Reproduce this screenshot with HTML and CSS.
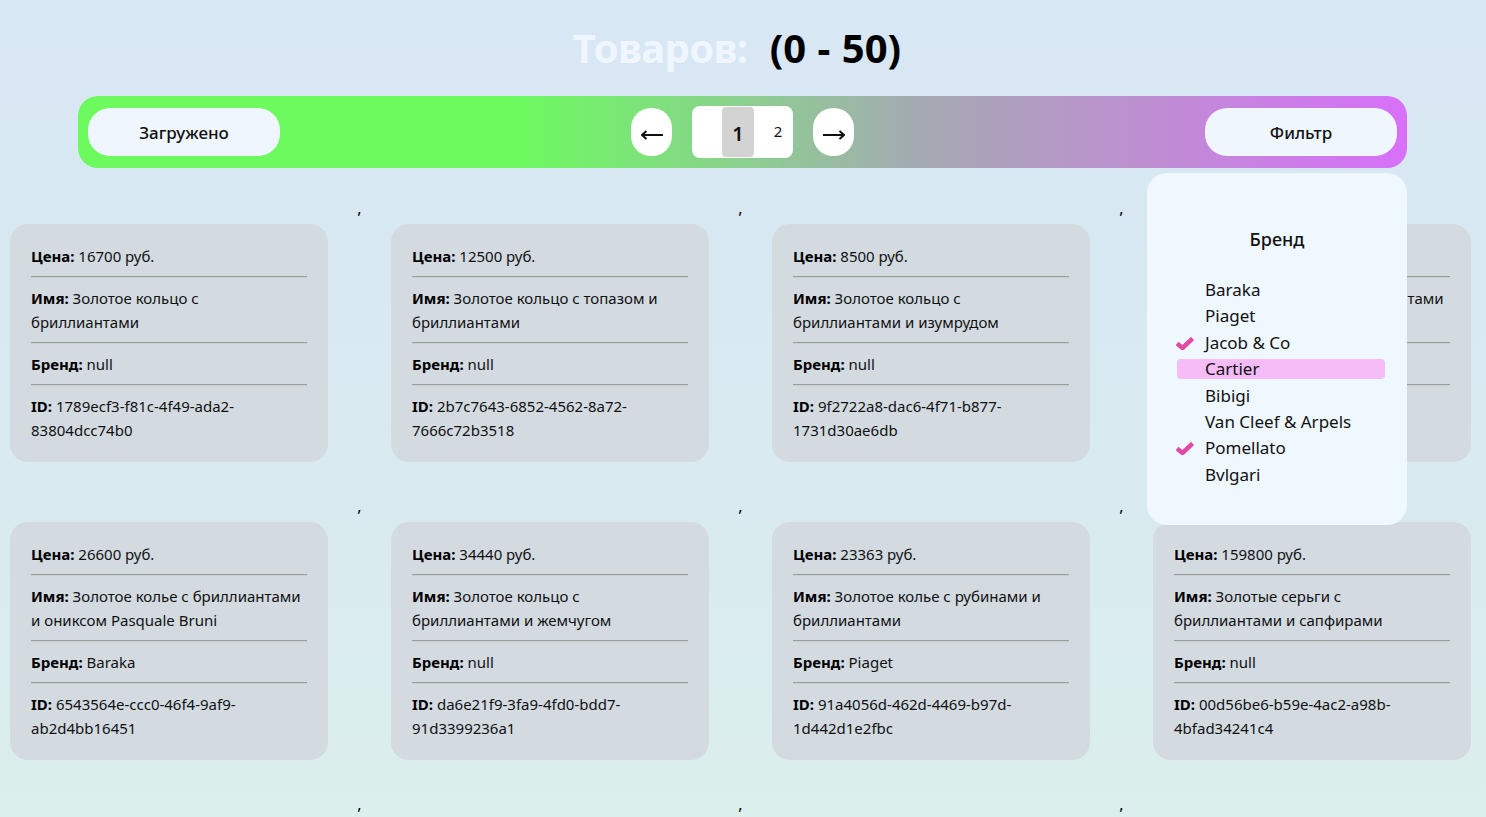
FILE: index.html
```html
<!DOCTYPE html>
<html lang="ru">
<head>
<meta charset="utf-8">
<title>Товары</title>
<link rel="stylesheet" href="styles.css">
</head>
<body>
<header class="header">
  <h1 class="title"><span class="title-label">Товаров:</span> <span class="title-range">(0 - 50)</span></h1>
</header>

<nav class="toolbar">
  <button class="pill">Загружено</button>
  <div class="pager">
    <button class="arrow" aria-label="Назад"><svg class="arrow-icon" viewBox="0 0 22 10"><path d="M1 5 H22 M5.5 1 L1 5 L5.5 9" /></svg></button>
    <div class="pages">
      <span class="page page-active">1</span>
      <span class="page page-small">2</span>
    </div>
    <button class="arrow" aria-label="Вперёд"><svg class="arrow-icon" viewBox="0 0 22 10"><path d="M0 5 H21 M16.5 1 L21 5 L16.5 9" /></svg></button>
  </div>
  <button class="pill">Фильтр</button>
</nav>

<div class="filter">
  <div class="filter-title">Бренд</div>
  <ul class="filter-list">
    <li class="filter-item">Baraka</li>
    <li class="filter-item">Piaget</li>
    <li class="filter-item checked"><svg class="check" viewBox="0 0 18 13"><path d="M1 6.5 L6.5 11 L16.5 1.5" /></svg>Jacob &amp; Co</li>
    <li class="filter-item hover">Cartier</li>
    <li class="filter-item">Bibigi</li>
    <li class="filter-item">Van Cleef &amp; Arpels</li>
    <li class="filter-item checked"><svg class="check" viewBox="0 0 18 13"><path d="M1 6.5 L6.5 11 L16.5 1.5" /></svg>Pomellato</li>
    <li class="filter-item">Bvlgari</li>
  </ul>
</div>

<main class="grid">
  <article class="card">
    <p><b>Цена:</b> 16700 руб.</p><hr>
    <p><b>Имя:</b> Золотое кольцо с бриллиантами</p><hr>
    <p><b>Бренд:</b> null</p><hr>
    <p><b>ID:</b> 1789ecf3-f81c-4f49-ada2-83804dcc74b0</p>
  </article>
  <span class="sep">,</span>
  <article class="card">
    <p><b>Цена:</b> 12500 руб.</p><hr>
    <p><b>Имя:</b> Золотое кольцо с топазом и бриллиантами</p><hr>
    <p><b>Бренд:</b> null</p><hr>
    <p><b>ID:</b> 2b7c7643-6852-4562-8a72-7666c72b3518</p>
  </article>
  <span class="sep">,</span>
  <article class="card">
    <p><b>Цена:</b> 8500 руб.</p><hr>
    <p><b>Имя:</b> Золотое кольцо с бриллиантами и изумрудом</p><hr>
    <p><b>Бренд:</b> null</p><hr>
    <p><b>ID:</b> 9f2722a8-dac6-4f71-b877-1731d30ae6db</p>
  </article>
  <span class="sep">,</span>
  <article class="card">
    <p><b>Цена:</b> 41200 руб.</p><hr>
    <p><b>Имя:</b> Золотое колье с бриллиантами и сапфирами</p><hr>
    <p><b>Бренд:</b> null</p><hr>
    <p><b>ID:</b> 5c1e9a02-7d3b-4e8f-9c21-0a6b7f4d2e91</p>
  </article>

  <article class="card">
    <p><b>Цена:</b> 26600 руб.</p><hr>
    <p><b>Имя:</b> Золотое колье с бриллиантами и ониксом Pasquale Bruni</p><hr>
    <p><b>Бренд:</b> Baraka</p><hr>
    <p><b>ID:</b> 6543564e-ccc0-46f4-9af9-ab2d4bb16451</p>
  </article>
  <span class="sep">,</span>
  <article class="card">
    <p><b>Цена:</b> 34440 руб.</p><hr>
    <p><b>Имя:</b> Золотое кольцо с бриллиантами и жемчугом</p><hr>
    <p><b>Бренд:</b> null</p><hr>
    <p><b>ID:</b> da6e21f9-3fa9-4fd0-bdd7-91d3399236a1</p>
  </article>
  <span class="sep">,</span>
  <article class="card">
    <p><b>Цена:</b> 23363 руб.</p><hr>
    <p><b>Имя:</b> Золотое колье с рубинами и бриллиантами</p><hr>
    <p><b>Бренд:</b> Piaget</p><hr>
    <p><b>ID:</b> 91a4056d-462d-4469-b97d-1d442d1e2fbc</p>
  </article>
  <span class="sep">,</span>
  <article class="card">
    <p><b>Цена:</b> 159800 руб.</p><hr>
    <p><b>Имя:</b> Золотые серьги с бриллиантами и сапфирами</p><hr>
    <p><b>Бренд:</b> null</p><hr>
    <p><b>ID:</b> 00d56be6-b59e-4ac2-a98b-4bfad34241c4</p>
  </article>

  <article class="card">
    <p><b>Цена:</b> 18900 руб.</p><hr>
    <p><b>Имя:</b> Золотое кольцо с сапфиром</p><hr>
    <p><b>Бренд:</b> null</p><hr>
    <p><b>ID:</b> 3e8a1f70-2b4c-4d9e-8f01-6c7d2a9b5e13</p>
  </article>
  <span class="sep">,</span>
  <article class="card">
    <p><b>Цена:</b> 27450 руб.</p><hr>
    <p><b>Имя:</b> Золотой браслет с бриллиантами</p><hr>
    <p><b>Бренд:</b> null</p><hr>
    <p><b>ID:</b> b4f2c9d1-8e7a-4c3b-a5d6-2f1e0b9c8a74</p>
  </article>
  <span class="sep">,</span>
  <article class="card">
    <p><b>Цена:</b> 9800 руб.</p><hr>
    <p><b>Имя:</b> Золотые серьги с фианитами</p><hr>
    <p><b>Бренд:</b> null</p><hr>
    <p><b>ID:</b> 7a9d3e5f-1c2b-4a8e-9d6f-0e4c3b2a1f58</p>
  </article>
  <span class="sep">,</span>
  <article class="card">
    <p><b>Цена:</b> 64000 руб.</p><hr>
    <p><b>Имя:</b> Золотая подвеска с изумрудом</p><hr>
    <p><b>Бренд:</b> null</p><hr>
    <p><b>ID:</b> c2e8f4a6-9b1d-4e3c-b7a5-8d6f0c2e4a19</p>
  </article>
</main>
</body>
</html>
```

FILE: styles.css
```css
* { box-sizing: border-box; }

html, body {
  margin: 0;
  padding: 0;
}

body {
  position: relative;
  height: 817px;
  overflow: hidden;
  font-family: "Noto Sans", "Open Sans", sans-serif;
  color: #111;
  background: linear-gradient(180deg, #d8e7f4 0%, #d9eaf0 60%, #dbefec 100%);
}

.header {
  height: 96px;
  display: flex;
  align-items: center;
  justify-content: center;
  padding-top: 0;
}

.title {
  margin: 0;
  font-size: 40px;
  font-weight: 700;
  line-height: 1;
  padding-right: 12px;
}

.title-label {
  color: #eff6fd;
  letter-spacing: -0.6px;
  margin-right: 12px;
}

.title-range {
  color: #000;
  word-spacing: 1px;
}

.toolbar {
  margin: 0 79px 0 78px;
  height: 72px;
  padding: 12px 10px;
  border-radius: 20px;
  display: flex;
  align-items: center;
  justify-content: space-between;
  background: linear-gradient(90deg, #6cfa5f 0%, #6cfa5f 33%, #8bd08f 50%, #a4aab2 63%, #bd8fd0 80%, #d86ff9 100%);
}

.pill {
  width: 192px;
  height: 48px;
  border: none;
  border-radius: 22px;
  background: #eff6fe;
  font-family: inherit;
  font-size: 17px;
  font-weight: 500;
  color: #111;
  padding: 0;
}

.pager {
  display: flex;
  align-items: center;
  gap: 20px;
}

.arrow {
  width: 41px;
  height: 48px;
  border: none;
  border-radius: 20px;
  background: #fff;
  padding: 6px 0 0;
  display: flex;
  align-items: center;
  justify-content: center;
}

.arrow-icon {
  width: 22px;
  height: 10px;
  fill: none;
  stroke: #111;
  stroke-width: 2;
}

.pages {
  width: 101px;
  height: 52px;
  background: #fff;
  border-radius: 8px;
  display: flex;
  align-items: stretch;
  padding: 1px 0 1px 30px;
}

.page {
  flex: none;
  display: flex;
  align-items: center;
  justify-content: center;
  color: #111;
}

.page-active {
  width: 32px;
  background: #d3d3d3;
  border-radius: 4px;
  font-size: 20px;
  font-weight: 600;
  padding-top: 2px;
}

.page-small {
  width: 39px;
  font-size: 15px;
  padding-left: 9px;
  padding-bottom: 2px;
}

.filter {
  position: absolute;
  top: 173px;
  left: 1147px;
  width: 260px;
  height: 352px;
  background: #eff7ff;
  border-radius: 20px;
  padding: 52px 22px 0 30px;
  z-index: 2;
}

.filter-title {
  text-align: center;
  font-size: 18px;
  font-weight: 500;
  line-height: 28px;
  margin-left: -8px;
  color: #111;
}

.filter-list {
  list-style: none;
  margin: 27px 0 0;
  padding: 0;
  display: flex;
  flex-direction: column;
  gap: 6.4px;
}

.filter-item {
  position: relative;
  height: 20px;
  line-height: 20px;
  font-size: 17px;
  padding-left: 28px;
  border-radius: 4px;
  color: #111;
}

.filter-item.hover {
  background: #f5bcf8;
}

.check {
  position: absolute;
  left: -1px;
  top: 4px;
  width: 18px;
  height: 13px;
  fill: none;
  stroke: #e24aa6;
  stroke-width: 4.5;
  stroke-linecap: butt;
  stroke-linejoin: miter;
}

.grid {
  display: grid;
  grid-template-columns: 318px 63px 318px 63px 318px 63px 318px;
  row-gap: 32px;
  align-items: start;
  padding: 28px 0 0 10px;
}

.sep {
  text-align: center;
  font-size: 16px;
  line-height: 24px;
  color: #000;
}

.card {
  margin-top: 28px;
  height: 238px;
  background: #d3dbe1;
  border-radius: 18px;
  padding: 20px 21px;
  font-size: 15px;
  line-height: 24px;
}

.card p {
  margin: 0;
}

.card b {
  font-weight: 700;
  color: #000;
}

.card hr {
  margin: 8px 0;
  height: 0;
  border: none;
  border-top: 1px solid #9c9c9c;
  border-bottom: 1px solid #c9d0d4;
}
```
